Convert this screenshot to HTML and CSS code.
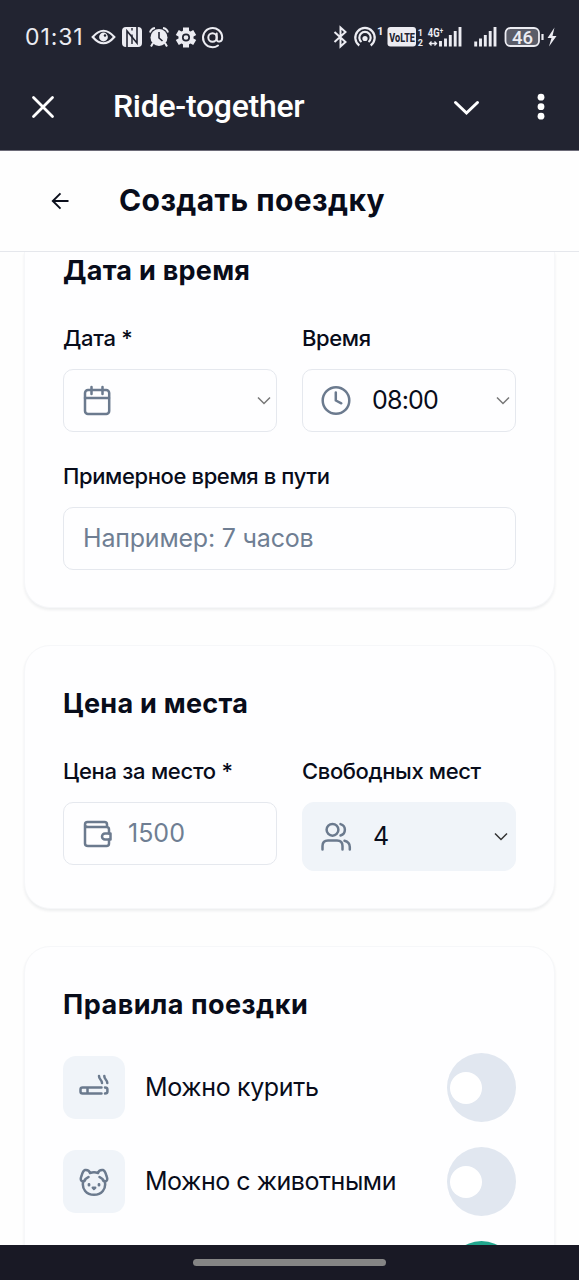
FILE: index.html
```html
<!DOCTYPE html>
<html lang="ru">
<head>
<meta charset="utf-8">
<title>Ride-together</title>
<link rel="stylesheet" href="styles.css">
</head>
<body>
<div class="screen">
  <header class="shell">
    <div class="status">
      <span class="clock">01:31</span>
      <svg class="status-left" width="140" height="30" viewBox="88 22 140 30">
        <g fill="none" stroke="#ececf2" stroke-width="2.200">
          <path d="M92.700 37Q103.500 24.500 114.300 37Q103.500 49.500 92.700 37Z"/>
          <circle cx="103.500" cy="37" r="3.300" fill="#ececf2"/>
        </g>
        <circle cx="105" cy="35.500" r="1.200" fill="#222431"/>
        <rect x="122" y="27" width="20" height="20" rx="4" fill="#ececf2"/>
        <path d="M127 47V31L137 43V27" fill="none" stroke="#222431" stroke-width="1.600"/>
        <path d="M132 34.500V44M132 30.500V28" fill="none" stroke="#222431" stroke-width="1.400"/>
        <circle cx="159" cy="37.500" r="8.500" fill="#ececf2"/>
        <path d="M150 32.500a6 6 0 0 1 5-4.500M168 32.500a6 6 0 0 0-5-4.500M153 43l-2 3.500M165 43l2 3.500" stroke="#ececf2" stroke-width="2" fill="none"/>
        <path d="M159 32v6l3.500 3" stroke="#222431" stroke-width="1.600" fill="none"/>
        <circle cx="186" cy="37.500" r="7.500" fill="#ececf2"/>
        <path d="M186 27.500v20M177.300 32.500l17.400 10M177.300 42.500l17.400-10" stroke="#ececf2" stroke-width="6"/>
        <circle cx="186" cy="37.500" r="3.200" fill="none" stroke="#222431" stroke-width="1.700"/>
        <g fill="none" stroke="#ececf2" stroke-width="2" stroke-linecap="round">
          <circle cx="212.500" cy="37.500" r="4.200"/>
          <path d="M216.700 33.500v5.500q0 3 2.800 2.500t2.700-4a9.600 9.600 0 1 0-4.200 8"/>
        </g>
      </svg>
      <svg class="status-right" width="230" height="30" viewBox="330 22 230 30">
        <path d="M334.500 32l11 10-5 4.500v-19l5 4.500-11 10" fill="none" stroke="#ececf2" stroke-width="2"/>
        <g fill="none" stroke="#ececf2" stroke-width="2.200">
          <path d="M359.300 45.500a9.700 9.700 0 1 1 11.400 0"/>
          <path d="M361.500 42a5.700 5.700 0 1 1 7 0"/>
        </g>
        <circle cx="365" cy="38.500" r="2.600" fill="#ececf2"/>
        <text class="s-digit" x="377" y="35" font-size="11.500">1</text>
        <rect x="387.500" y="27" width="28.500" height="19.500" rx="3" fill="#ececf2"/>
        <text class="s-volte" transform="translate(389.300 41.500) scale(.7 1)">VoLTE</text>
        <text class="s-digit" x="417.800" y="35.500" font-size="9">1</text>
        <text class="s-digit" x="417.800" y="46.300" font-size="9">2</text>
        <text class="s-digit" transform="translate(427.800 36.500) scale(.75 1)" font-size="12.500">4G⁺</text>
        <path d="M429.500 43.500h7M431.500 41.500l-2 2 2 2M434.500 41.500l2 2-2 2" stroke="#ececf2" stroke-width="1.300" fill="none"/>
        <path d="M440.500 41v5.500M445.500 38.500v8M450.300 35v11.500M455.200 31v15.500M460 27v19.500M475.700 41.500v5M480.500 38.500v8M485.300 35v11.500M490.200 31v15.500M495 27v19.500" stroke="#ececf2" stroke-width="2.900"/>
        <rect x="505.500" y="28" width="33.500" height="18" rx="5" fill="#5a5c68" stroke="#ececf2" stroke-width="1.800"/>
        <path d="M542.500 34v6" stroke="#ececf2" stroke-width="2.200"/>
        <text class="s-batt" x="512" y="43.500">46</text>
        <path d="M554.500 27.500l-7 10.500h4l-2.500 8.500 7.500-10.500h-4z" fill="#ececf2"/>
      </svg>
    </div>
    <div class="titlebar">
      <svg class="close" width="26" height="26" viewBox="0 0 26 26"><path d="M3.500 3.500l19 19M22.500 3.500l-19 19" stroke="#fff" stroke-width="2.800" stroke-linecap="round"/></svg>
      <span class="app-name">Ride-together</span>
      <svg class="collapse" width="30" height="20" viewBox="0 0 30 20"><path d="M4.500 5.500L15.500 16l11-10.500" fill="none" stroke="#fff" stroke-width="3" stroke-linecap="round"/></svg>
      <svg width="10" height="30" viewBox="0 0 10 30" fill="#fff"><circle cx="5" cy="5.200" r="3.400"/><circle cx="5" cy="14.700" r="3.400"/><circle cx="5" cy="24.200" r="3.400"/></svg>
    </div>
  </header>

  <div class="page-head">
    <svg class="back" width="20" height="20" viewBox="0 0 20 20"><path d="M18.500 10H3M10.500 2.300L2.800 10l7.700 7.700" fill="none" stroke="#0b0f1c" stroke-width="1.900"/></svg>
    <h1 class="page-title">Создать поездку</h1>
  </div>

  <main class="content">
    <section class="card card-first">
      <h2 class="card-title t-date">Дата и время</h2>
      <div class="pair">
        <div class="field">
          <span class="label l-date">Дата *</span>
          <div class="input">
            <svg class="icon" width="32" height="32" viewBox="0 0 32 32"><rect x="4" y="6" width="24.200" height="24" rx="3"/><path d="M10.500 3v7M21.500 3v7M4 14h24"/></svg>
            <svg class="chev" width="16" height="10" viewBox="0 0 16 10"><path d="M2 2.500L8 8.500l6-6"/></svg>
          </div>
        </div>
        <div class="field">
          <span class="label l-time">Время</span>
          <div class="input">
            <svg class="icon" width="32" height="32" viewBox="0 0 32 32"><circle cx="16" cy="16.500" r="13.300"/><path d="M15.800 8.500v8l5.500 2.800"/></svg>
            <span class="value v-time">08:00</span>
            <svg class="chev" width="16" height="10" viewBox="0 0 16 10"><path d="M2 2.500L8 8.500l6-6"/></svg>
          </div>
        </div>
      </div>
      <div class="field field-wide">
        <span class="label l-dur">Примерное время в пути</span>
        <div class="input"><span class="value muted v-dur">Например: 7 часов</span></div>
      </div>
    </section>

    <section class="card">
      <h2 class="card-title t-price">Цена и места</h2>
      <div class="pair">
        <div class="field">
          <span class="label l-price">Цена за место *</span>
          <div class="input">
            <svg class="icon" width="32" height="32" viewBox="0 0 32 32"><path d="M26 10V7.500Q26 5 23.500 5H6.500Q4 5 4 7.500V26.500Q4 29 7 29H25.500Q28 29 28 26.500V22.500M4 7.700Q4 10 7 10H25.500Q28 10 28 12.500V16.500"/><path d="M29.500 16.500H24a3 3 0 0 0 0 6h5.500z"/></svg>
            <span class="value muted v-price">1500</span>
          </div>
        </div>
        <div class="field">
          <span class="label l-seats">Свободных мест</span>
          <div class="input filled">
            <svg class="icon" width="32" height="32" viewBox="0 0 32 32"><circle cx="12.500" cy="9.800" r="5.900"/><path d="M2.500 29.500V26Q2.500 20.500 8 20.500H17Q22.500 20.500 22.500 26V29.500M20.500 4.100a5.900 5.900 0 0 1 0 11.400M24.500 20.700Q29.800 22 29.800 27V29.500"/></svg>
            <span class="value v-seats">4</span>
            <svg class="chev dark" width="16" height="10" viewBox="0 0 16 10"><path d="M2 2.500L8 8.500l6-6"/></svg>
          </div>
        </div>
      </div>
    </section>

    <section class="card card-rules">
      <h2 class="card-title t-rules">Правила поездки</h2>
      <div class="rules">
        <div class="rule">
          <span class="badge"><svg class="icon" width="30" height="30" viewBox="0 0 30 30"><path d="M22.500 14.500H3.500Q1.500 14.500 1.500 16.500v2Q1.500 20.500 3.500 20.500H22.500M8.500 14.500V20.500M26 14.500q2.400 0 2.400 1.700v2.600q0 1.700-2.400 1.700M20 3c0 4 3 3.500 3 7M25.300 3c0 4 3 3.500 3 7"/></svg></span>
          <span class="rule-text r-smoke">Можно курить</span>
          <span class="toggle"></span>
        </div>
        <div class="rule">
          <span class="badge"><svg class="icon" width="30" height="30" viewBox="0 0 30 30"><path d="M11 6Q15 4.700 19 6Q20 2.500 24 3Q26 3.500 27.500 9Q29.200 13 27 14.200Q24.500 15 23.500 12L20.500 10M11 6Q10 2.500 6 3Q4 3.500 2.500 9Q.8 13 3 14.200Q5.500 15 6.500 12L9.500 10M4.200 14.500C2.500 22 7.500 27.800 15 27.800S27.500 22 25.800 14.500"/><path d="M10 17.500v.7M20 17.500v.7" stroke-width="2.800"/><path d="M13.800 20.700h2.400L15 22z"/></svg></span>
          <span class="rule-text r-pets">Можно с животными</span>
          <span class="toggle"></span>
        </div>
        <div class="rule">
          <span class="toggle on"></span>
        </div>
      </div>
    </section>
  </main>

  <footer class="navbar"><span class="pill"></span></footer>
</div>
</body>
</html>
```

FILE: styles.css
```css
* { box-sizing: border-box; }
body { margin: 0; background: #fefefe; color: #080c1a; font-family: Inter, "Noto Sans", sans-serif; }
.screen { width: 579px; height: 1280px; display: flex; flex-direction: column; overflow: hidden; }
svg { display: block; flex: none; }

.shell { flex: none; height: 151px; background: #222431; border-bottom: 1px solid #6c6b78; }
.status { display: flex; align-items: center; height: 74px; padding: 0 19px 0 25px; color: #ececf2; }
.clock { width: 63px; font-family: Inter, sans-serif; font-size: 23px; letter-spacing: .9px; white-space: nowrap; }
.status-right { margin-left: auto; }
.s-digit { fill: #ececf2; font-family: Roboto, sans-serif; font-weight: 700; }
.s-volte { fill: #222431; font-family: Roboto, sans-serif; font-weight: 800; font-size: 13px; }
.s-batt { fill: #ececf2; font-family: Roboto, sans-serif; font-size: 18.5px; font-weight: 500; }
.titlebar { display: flex; align-items: center; height: 66px; padding: 0 33px 0 30px; color: #fff; }
.app-name { margin-left: 57px; font-family: Roboto, sans-serif; font-weight: 500; font-size: 32px; letter-spacing: -.28px; line-height: 36px; padding-bottom: 2px; white-space: nowrap; }
.collapse { margin-left: auto; margin-right: 55px; }

.page-head { flex: none; display: flex; align-items: center; height: 101px; padding-left: 50px; border-bottom: 1px solid #e5e7ec; background: #fefefe; }
.page-title { margin: 0 0 0 49px; padding-bottom: 2px; font-size: 30px; font-weight: 700; letter-spacing: .4px; white-space: nowrap; }

.content { flex: 1; min-height: 0; overflow: hidden; display: flex; flex-direction: column; gap: 37px; padding: 0 24px; }
.card { flex: none; padding: 39px 37px 37px 38px; border: 1px solid #f6f7f9; border-radius: 26px; background: #fefeff; box-shadow: 0 2px 3px rgba(20, 24, 40, .07); }
.card-first { padding-top: 0; border-top: 0; border-top-left-radius: 0; border-top-right-radius: 0; }
.card-title { margin: 0 0 36px; height: 38px; line-height: 38px; font-size: 27px; font-weight: 700; letter-spacing: .27px; white-space: nowrap; }
.t-rules { letter-spacing: .5px; }
.pair { display: grid; grid-template-columns: 214px 214px; gap: 25px; align-items: start; }
.field { display: flex; flex-direction: column; gap: 19px; }
.field-wide { margin-top: 32px; width: 453px; }
.label { height: 24px; line-height: 24px; font-size: 22px; font-weight: 500; letter-spacing: -.38px; white-space: nowrap; }
.l-date, .l-price { letter-spacing: -.28px; }
.input { display: flex; align-items: center; height: 63px; padding: 0 4px 1px 17px; border: 1.5px solid #e5e8ee; border-radius: 10px; background: #fefeff; }
.input.filled { height: 69px; padding-right: 6px; border-color: #f0f4f9; border-radius: 12px; background: #f0f4f9; }
.icon { fill: none; stroke: #6b7a8e; stroke-width: 2.5; stroke-linecap: round; stroke-linejoin: round; }
.chev { margin-left: auto; fill: none; stroke: #777; stroke-width: 1.5; }
.chev.dark { stroke: #333; }
.value { font-size: 25px; white-space: nowrap; }
.muted { color: #6f7e93; }
.v-time { margin-left: 20px; letter-spacing: -.8px; }
.v-dur { margin-left: 2px; letter-spacing: -.2px; }
.v-price { margin-left: 15px; }
.v-seats { margin-left: 21px; }

.card-rules .card-title { margin-bottom: 29px; }
.rules { display: flex; flex-direction: column; gap: 25px; width: 453px; }
.rule { display: flex; align-items: center; height: 69px; }
.badge { display: grid; place-items: center; width: 62px; height: 63px; border-radius: 13px; background: #f0f4f9; }
.rule-text { margin-left: 20px; padding-bottom: 2px; font-size: 25px; white-space: nowrap; }
.r-smoke { letter-spacing: -.35px; }
.r-pets { letter-spacing: -.46px; }
.toggle { display: flex; align-items: center; width: 69px; height: 69px; margin-left: auto; padding-left: 3px; border-radius: 50%; background: #e1e7f0; }
.toggle::before { content: ""; width: 32px; height: 32px; border-radius: 50%; background: #fff; }
.toggle.on { background: #21a68d; }

.navbar { flex: none; display: flex; justify-content: center; height: 35px; padding-top: 14px; background: #191925; }
.pill { width: 193px; height: 7px; border-radius: 4px; background: #858585; }
```
